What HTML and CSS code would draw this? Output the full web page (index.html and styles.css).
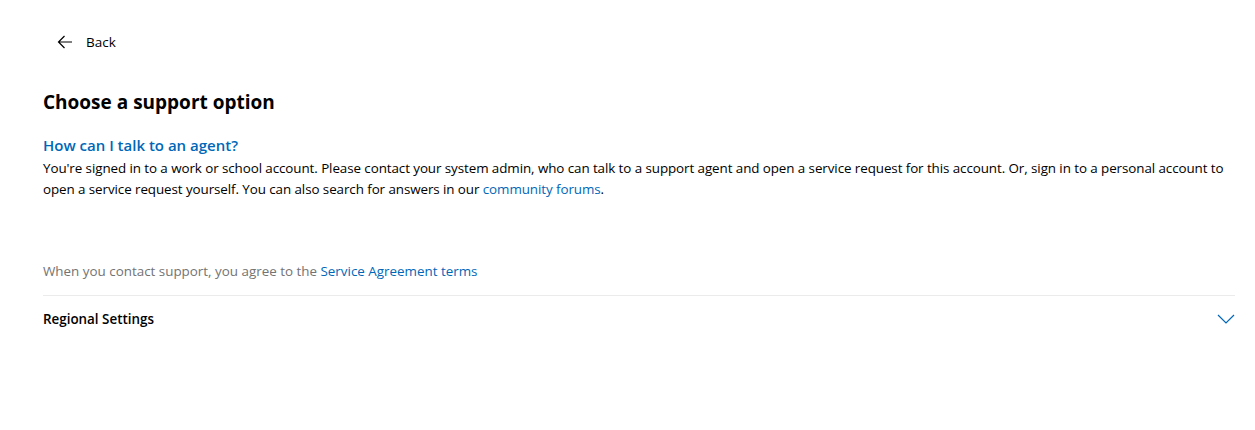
FILE: index.html
```html
<!DOCTYPE html>
<html lang="en">
<head>
<meta charset="utf-8">
<title>Choose a support option</title>
<link rel="stylesheet" href="styles.css">
</head>
<body>
<div class="page">
  <a class="back" href="#">
    <svg class="back-icon" width="16" height="16" viewBox="0 0 16 16" aria-hidden="true">
      <path d="M15 8H1.5M7.5 2 1.5 8l6 6" fill="none" stroke="#000" stroke-width="1.2"/>
    </svg>
    <span>Back</span>
  </a>
  <h1 class="title">Choose a support option</h1>
  <h2 class="subtitle">How can I talk to an agent?</h2>
  <p class="body">You're signed in to a work or school account. Please contact your system admin, who can talk to a support agent and open a service request for this account. Or, sign in to a personal account to open a service request yourself. You can also search for answers in our <a class="link" href="#">community forums</a>.</p>
  <p class="terms">When you contact support, you agree to the <a class="link" href="#">Service Agreement terms</a></p>
  <div class="region">
    <span class="region-label">Regional Settings</span>
    <svg class="chevron" width="18" height="10" viewBox="0 0 18 10" aria-hidden="true">
      <path d="M1 1l8 8 8-8" fill="none" stroke="#0067b8" stroke-width="1.2"/>
    </svg>
  </div>
</div>
</body>
</html>
```
FILE: styles.css
```css
html, body { margin: 0; padding: 0; background: #fff; }
body { font-family: "Open Sans", "Noto Sans", sans-serif; color: #000; font-size: 13.4px; }
.page { padding: 32px 20px 0 43px; }
.back { display: inline-flex; align-items: center; gap: 13px; color: #000; text-decoration: none; font-size: 13.5px; margin-left: 14px; height: 20px; }
.back-icon { display: block; }
.title { font-size: 19px; font-weight: 700; margin: 34px 0 0; line-height: 28px; }
.subtitle { font-size: 15px; font-weight: 600; color: #0067b8; margin: 18px 0 0; line-height: 22px; }
.body { margin: 2px 0 0; line-height: 21px; letter-spacing: -0.08px; }
.link { color: #0067b8; text-decoration: none; }
.terms { color: #737373; margin: 61px 0 0; line-height: 20px; }
.region { border-top: 1px solid #ebebeb; margin-top: 14px; display: flex; justify-content: space-between; align-items: center; height: 46px; }
.region-label { font-weight: 600; }
.chevron { display: block; margin-right: 0; }
```
